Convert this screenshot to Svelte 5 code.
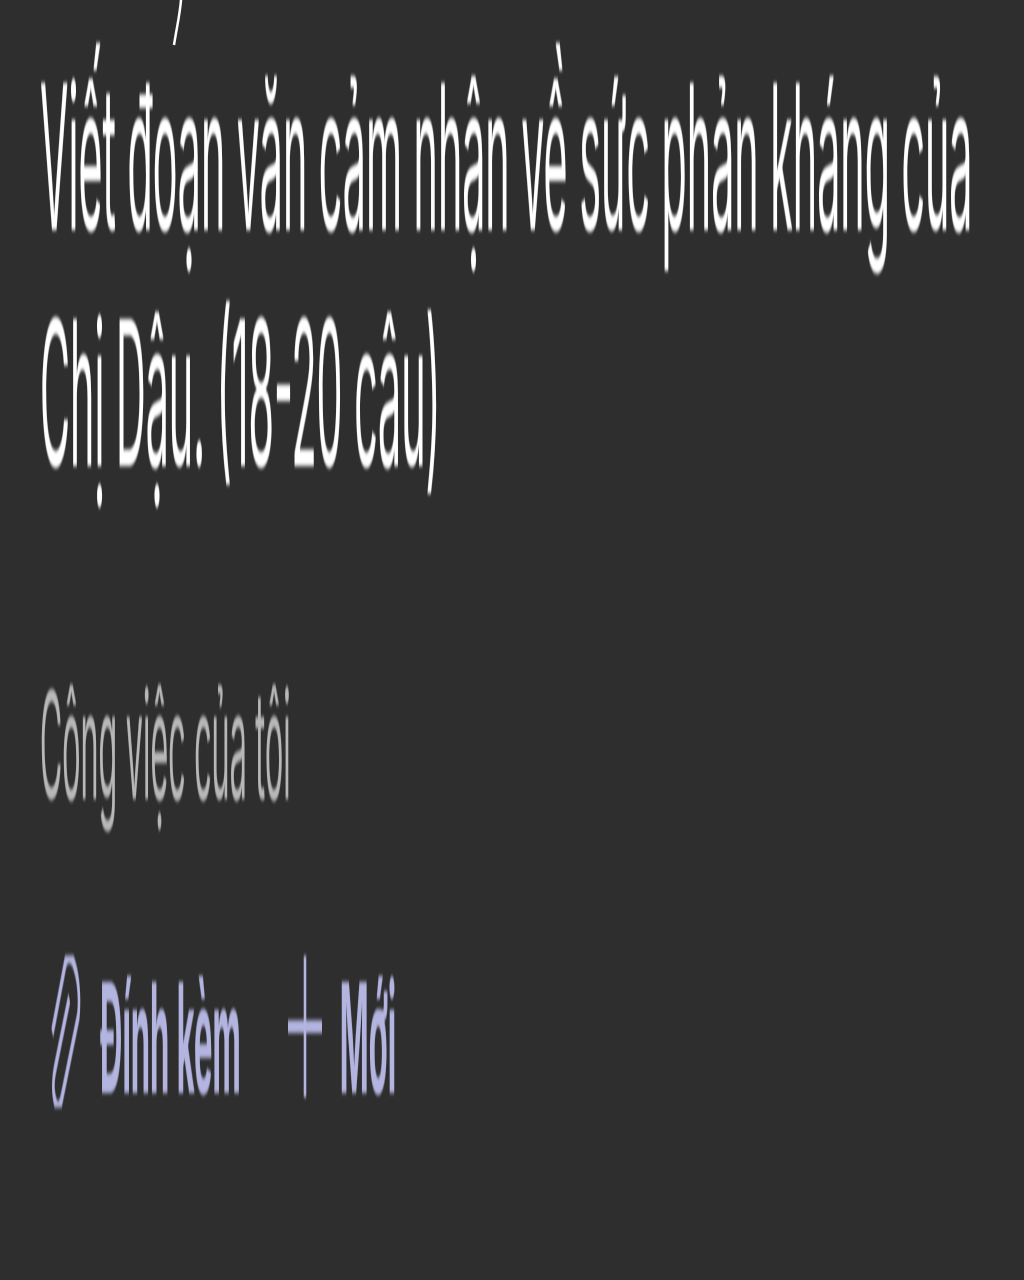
<script>
	let title = 'Viết đoạn văn cảm nhận về sức phản kháng của Chị Dậu. (18-20 câu)';
</script>

<div class="screen">
	<svg class="tail" viewBox="0 0 20 50" width="20" height="50" aria-hidden="true">
		<path d="M12 0 C11 14 8 26 5 45" fill="none" stroke="#fff" stroke-width="2.5" />
	</svg>
	<div class="page">
		<h1>{title}</h1>
		<p class="label">Công việc của tôi</p>
		<div class="actions">
			<button>
				<svg class="clip" viewBox="0 0 32 32" preserveAspectRatio="none" aria-hidden="true">
					<path d="M2.3 16 L15.5 1.4 C18 -.2 22 0 25 2.5 C28.5 5 30 9 28.3 12.6 L11.7 29.6 C9.5 31.8 7 31.8 5 30 C2.5 28 3 25.5 5 23.5 L19.3 8.8" />
				</svg>
				Đính kèm
			</button>
			<button>
				<svg class="plus" viewBox="0 0 34 29" preserveAspectRatio="none" aria-hidden="true">
					<path d="M17 0 V29 M0 14.5 H34" />
				</svg>
				Mới
			</button>
		</div>
	</div>
</div>

<style>
	:global(body) {
		margin: 0;
		background: #2e2e2e;
	}

	.screen {
		position: relative;
		width: 1024px;
		height: 1280px;
		overflow: hidden;
		background: #2e2e2e;
	}

	.tail {
		position: absolute;
		top: 0;
		left: 169px;
	}

	/* the whole shot is stretched vertically */
	.page {
		width: 1024px;
		height: 261px;
		box-sizing: border-box;
		padding: 8px 40px 0;
		transform: scale(1, 4.9);
		transform-origin: 0 0;
		font-family: Inter, Roboto, sans-serif;
		filter: blur(0.4px);
	}

	h1 {
		margin: 0;
		font-size: 41.2px;
		line-height: 48.2px;
		font-weight: 400;
		color: #fff;
	}

	.label {
		margin: 29.6px 0 0;
		font-size: 30.5px;
		line-height: 36px;
		color: #b8b8b8;
	}

	.actions {
		display: flex;
		gap: 47px;
		margin-top: 24.4px;
		padding-left: 10px;
	}

	button {
		display: flex;
		align-items: center;
		gap: 18px;
		padding: 0;
		border: 0;
		background: none;
		font: 700 31px/36px Inter, Roboto, sans-serif;
		color: #b3b5e0;
	}

	svg.clip,
	svg.plus {
		fill: none;
		stroke: #b3b5e0;
		stroke-width: 2.6;
	}

	.clip {
		width: 32px;
		height: 31.6px;
		margin-bottom: 3.6px;
	}

	.plus {
		width: 34px;
		height: 29px;
		margin-bottom: 6px;
	}
</style>
